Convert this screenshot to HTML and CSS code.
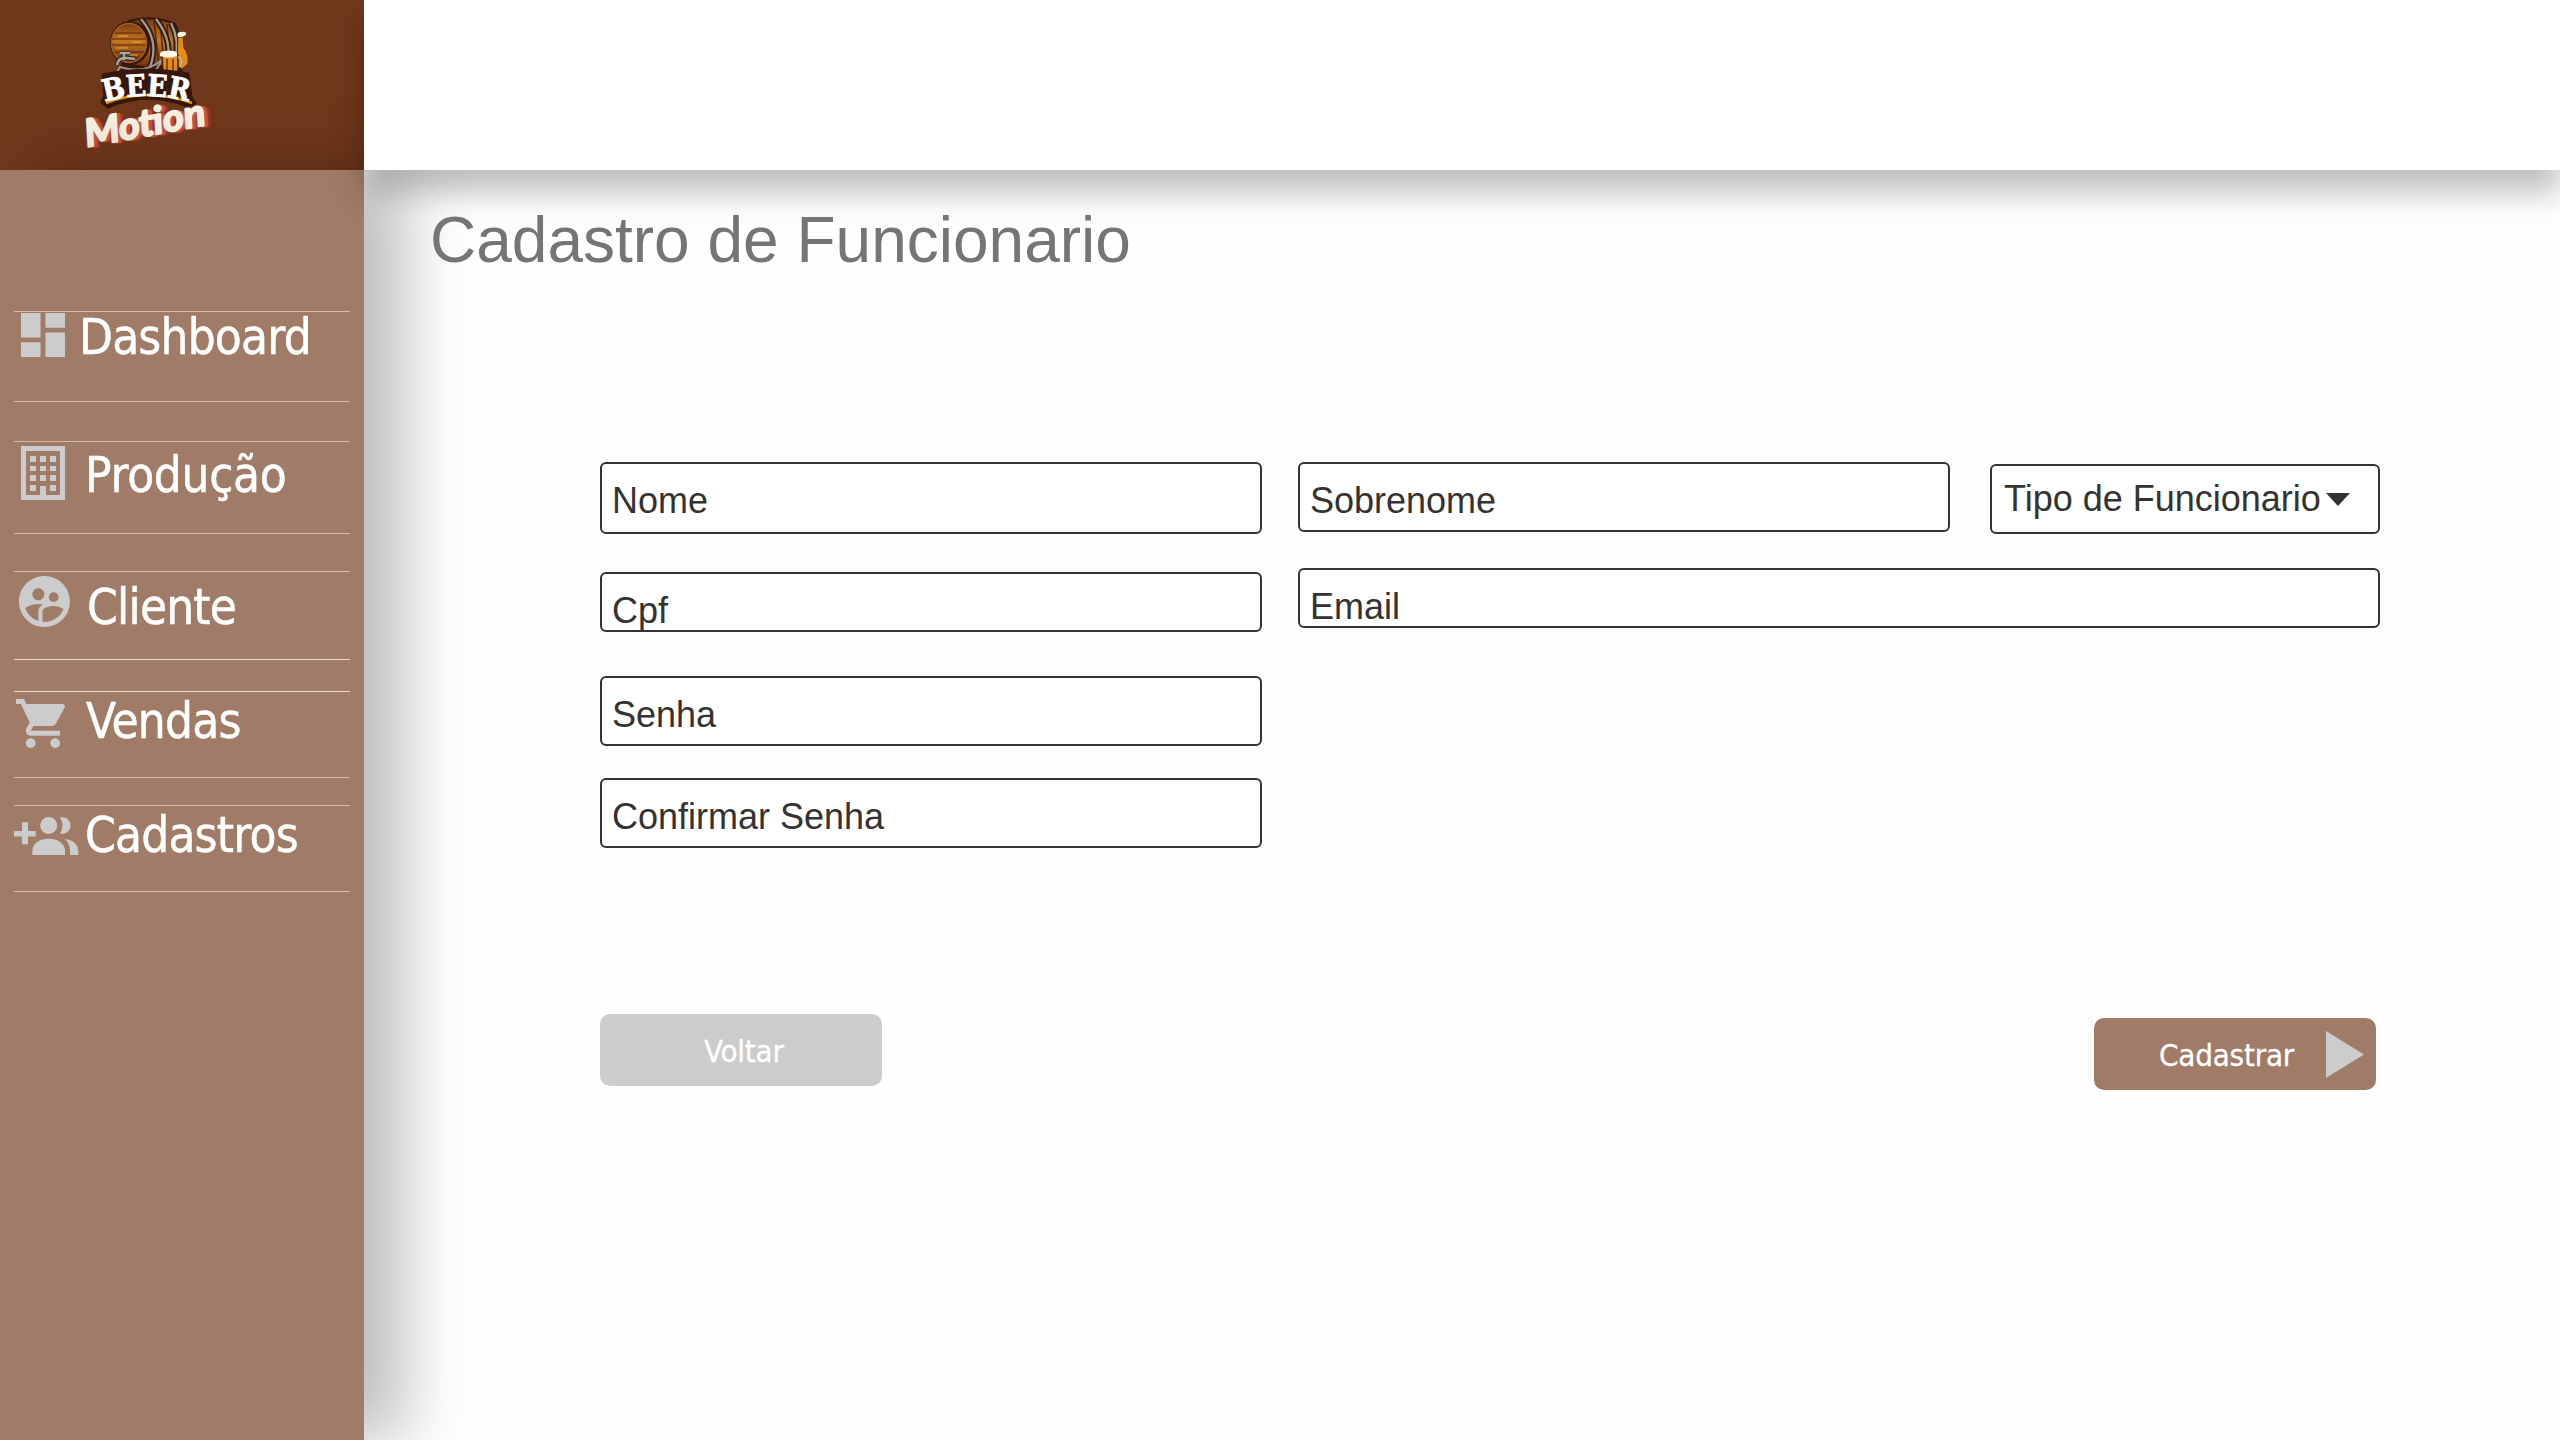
FILE: index.html
```html
<!DOCTYPE html>
<html lang="pt-BR">
<head>
<meta charset="utf-8">
<title>Cadastro de Funcionario</title>
<link rel="stylesheet" href="styles.css">
</head>
<body>
<div class="app">
  <div class="brand">
    <svg class="logo" width="136" height="136" viewBox="0 0 136 136" role="img" aria-label="Beer Motion">
      <defs>
        <linearGradient id="wood" x1="0" y1="0" x2="0" y2="1">
          <stop offset="0" stop-color="#7a3c10"/><stop offset=".45" stop-color="#c77620"/><stop offset="1" stop-color="#6b310c"/>
        </linearGradient>
        <path id="arc" d="M21.500 85Q63 73 107 85"/>
      </defs>
      <path d="M30 59L43 40H94L103 61Q66 55 30 59Z" fill="#3a1a0a"/>
      <path d="M46 4Q70-2 92 7Q101 24 94 44Q76 54 48 48Z" fill="url(#wood)" stroke="#32170a" stroke-width="2"/>
      <path d="M77 5l4 42M84 7l3 38M71 4l5 44M91 14l2 24" stroke="#54270c" stroke-width="1.5" fill="none"/>
      <path d="M58 2Q77 24 67 50M73 2Q91 25 83 48M88 6Q97 24 92 44" fill="none" stroke="#2e1c15" stroke-width="6"/>
      <path d="M58 2Q77 24 67 50M73 2Q91 25 83 48M88 6Q97 24 92 44" fill="none" stroke="#a99b8e" stroke-width="2.2"/>
      <ellipse cx="47" cy="26" rx="20" ry="22" fill="#32170a"/>
      <ellipse cx="46" cy="26" rx="17.5" ry="19.5" fill="url(#wood)" stroke="#a75f1d" stroke-width="1.5"/>
      <path d="M32 16H59M29 22H63M29 28H63M31 35H61M36 41H56" stroke="#562909" stroke-width="1.2"/>
      <path d="M35 19h10M49 25h9M33 31h12M46 38h9" stroke="#eda443" stroke-width="1"/>
      <path d="M33 57l4-7q25 8 43-8l-9 14" fill="none" stroke="#9c938a" stroke-width="2.2"/>
      <path d="M34 48q1-8 10-7l8 1M41 36v7M37 36h10" fill="none" stroke="#292321" stroke-width="4.500"/>
      <path d="M34 48q1-8 10-7l8 1M41 36v7M37 36h10" fill="none" stroke="#aaa59e" stroke-width="2.500"/>
      <path d="M95 20h5l1 11q5 5 4 16l-6 5-5-4Z" fill="#e78b13" stroke="#5a290c"/>
      <path d="M95 20q-2-5 3-5q6-1 5 3l-4 2Z" fill="#fff7e8"/>
      <path d="M79 38h16v16q-8 4-15 0Z" fill="#e58c14" stroke="#482008" stroke-width="1.500"/>
      <path d="M84 42v12M90 42v12" stroke="#8d440d" stroke-width="2"/>
      <path d="M95 40q6 2 2 10" fill="none" stroke="#c2afa0" stroke-width="2"/>
      <path d="M77 39q-1-5 5-5q5-1 8 0q5 0 4 5q-8 3-17 0Z" fill="#fff8ed"/>
      <path d="M20 58Q62 49 105 57L108 80L112 86L105 89Q64 73 25 90L19 85L22 78Z" fill="#35180b" stroke="#35180b" stroke-width="3" stroke-linejoin="round"/>
      <path d="M23 86Q64 70 109 86" fill="none" stroke="#dc9510" stroke-width="2.500"/>
      <text class="logo-beer"><textPath href="#arc" textLength="85" lengthAdjust="spacingAndGlyphs">BEER</textPath></text>
      <g transform="translate(4 130) rotate(-10.500)">
        <text class="logo-motion logo-motion-deep" x="6" y="2" textLength="122" lengthAdjust="spacingAndGlyphs">Motion</text>
        <text class="logo-motion logo-motion-red" x="3.500" y="1" textLength="122" lengthAdjust="spacingAndGlyphs">Motion</text>
        <text class="logo-motion" x="0" y="0" textLength="122" lengthAdjust="spacingAndGlyphs">Motion</text>
      </g>
    </svg>
  </div>
  <header class="topbar"></header>
  <nav class="sidebar">
    <a class="item item-dashboard">
      <svg class="icon" width="44" height="44" viewBox="3 3 18 18"><path d="M3 13h8V3H3v10zm0 8h8v-6H3v6zm10 0h8V11h-8v10zm0-18v6h8V3h-8z"/></svg>
      <span class="label">Dashboard</span>
    </a>
    <a class="item item-producao">
      <svg class="icon" width="44" height="54" viewBox="0 0 44 54"><path fill-rule="evenodd" d="M0 0H44V54H0ZM5 5V49H19V40H25V49H39V5Z"/><path d="M9 10h6v6H9zM19 10h6v6h-6zM29 10h6v6h-6zM9 20h6v5H9zM19 20h6v5h-6zM29 20h6v5h-6zM9 29h6v6H9zM19 29h6v6h-6zM29 29h6v6h-6zM9 39h6v6H9zM29 39h6v6h-6z"/></svg>
      <span class="label">Produção</span>
    </a>
    <a class="item item-cliente item-bright-bottom">
      <svg class="icon" width="51" height="51" viewBox="2 2 20 20"><path d="M11.99 2c-5.52 0-10 4.48-10 10s4.48 10 10 10 10-4.48 10-10-4.48-10-10-10zm3.61 6.34c1.07 0 1.93.86 1.93 1.93 0 1.07-.86 1.93-1.93 1.93-1.07 0-1.93-.86-1.93-1.93-.01-1.07.86-1.93 1.93-1.93zm-6-1.58c1.3 0 2.36 1.06 2.36 2.36 0 1.3-1.06 2.36-2.36 2.36s-2.36-1.06-2.36-2.36c0-1.31 1.05-2.36 2.36-2.36zm0 9.13v3.75c-2.4-.75-4.3-2.6-5.14-4.96 1.05-1.12 3.67-1.69 5.14-1.69.53 0 1.2.08 1.9.22-1.64.87-1.9 2.02-1.9 2.68zM11.99 20c-.27 0-.53-.01-.79-.04v-4.07c0-1.42 2.94-2.13 4.4-2.13 1.07 0 2.92.39 3.84 1.15-1.17 2.97-4.06 5.09-7.45 5.09z"/></svg>
      <span class="label">Cliente</span>
    </a>
    <a class="item item-vendas item-bright-top">
      <svg class="icon" width="49" height="49" viewBox="1 2 20 20"><path d="M7 18c-1.1 0-1.99.9-1.99 2S5.900 22 7 22s2-.9 2-2-.9-2-2-2zM1 2v2h2l3.600 7.590-1.350 2.450c-.16.28-.25.61-.25.96 0 1.100.9 2 2 2h12v-2H7.420c-.14 0-.25-.11-.25-.25l.03-.12.9-1.630h7.450c.75 0 1.410-.41 1.750-1.030l3.580-6.490c.08-.14.12-.31.12-.48 0-.55-.45-1-1-1H5.210l-.94-2H1zm16 16c-1.100 0-1.990.9-1.990 2s.89 2 1.990 2 2-.9 2-2-.9-2-2-2z"/></svg>
      <span class="label">Vendas</span>
    </a>
    <a class="item item-cadastros">
      <svg class="icon" width="65" height="38" viewBox="0 0 65 38"><path d="M8 5.300h6V14h7.700v5.500H14V27.300H8V19.500H0V14H8Z"/><circle cx="34.700" cy="8.500" r="8.500"/><path d="M46 .5C53-1 56.500 4 56.500 8.500S53 18 46 16.500Q51 8.500 46 .5Z"/><path d="M18.300 38V34C18.300 26 26 21.700 34.700 21.700S51 26 51 34V38Z"/><path d="M51 22C59 22.500 64.300 28 64.300 34V38H56V34Q56 27 51 22Z"/></svg>
      <span class="label">Cadastros</span>
    </a>
  </nav>
  <main class="content">
    <h1 class="title">Cadastro de Funcionario</h1>
    <form class="form">
      <div class="fields">
        <div class="column column-left">
          <label class="field field-nome">Nome</label>
          <label class="field field-cpf">Cpf</label>
          <label class="field field-senha">Senha</label>
          <label class="field field-confirmar">Confirmar Senha</label>
        </div>
        <div class="column column-right">
          <div class="row">
            <label class="field field-sobrenome">Sobrenome</label>
            <div class="field field-tipo"><span>Tipo de Funcionario</span><svg width="24" height="13" viewBox="0 0 24 13"><path d="M0 0H24L12 13Z" fill="#333"/></svg></div>
          </div>
          <label class="field field-email">Email</label>
        </div>
      </div>
      <div class="actions">
        <button type="button" class="button button-back">Voltar</button>
        <button type="button" class="button button-submit">Cadastrar<svg class="play" width="38" height="47" viewBox="0 0 38 47"><path d="M0 0L38 23.500L0 47Z" fill="#ccc"/></svg></button>
      </div>
    </form>
  </main>
</div>
</body>
</html>
```
FILE: styles.css
```css
* { box-sizing: border-box; }

body {
  margin: 0;
  background: #fefefe;
  font-family: "Liberation Sans", Arial, sans-serif;
}

.app {
  display: grid;
  grid-template: 170px 1270px / 364px 1fr;
  height: 1440px;
  overflow: hidden;
}

/* Header */
.brand {
  background: #70371b;
  padding: 17px 0 0 83px;
}

.logo {
  display: block;
  overflow: visible;
}

.logo-beer {
  font: bold 30px "DejaVu Serif", serif;
  fill: #fff;
  stroke: #fff;
  stroke-width: .8px;
}

.logo-motion {
  font: italic bold 38px Lato, sans-serif;
  fill: #f7f1e1;
  stroke: #f7f1e1;
  stroke-width: 2px;
  stroke-linejoin: round;
}

.logo-motion-red { fill: #c9503f; stroke: #c9503f; }
.logo-motion-deep { fill: #8f3a29; stroke: #8f3a29; }

.topbar {
  z-index: 2;
  background: #fff;
  box-shadow: 0 22px 30px rgba(0, 0, 0, .26);
}

/* Sidebar */
.sidebar {
  z-index: 1;
  background: #a07b67;
  box-shadow: 40px 0 60px rgba(0, 0, 0, .25);
  padding: 141px 14px 0;
}

.item {
  display: flex;
  align-items: flex-start;
  border: solid #d3bbae;
  border-width: 1px 0;
  color: #fff;
}

.icon {
  flex: none;
  fill: #ccc;
}

.label {
  font: 49px/40px "DejaVu Sans Condensed", "DejaVu Sans", sans-serif;
  font-stretch: condensed;
  letter-spacing: -.8px;
  -webkit-text-stroke: .5px #fff;
  white-space: nowrap;
}

.item-dashboard { height: 91px; }
.item-dashboard .icon { margin: 1px 14px 0 7px; }
.item-dashboard .label { margin-top: 6px; }

.item-producao { height: 93px; margin-top: 39px; }
.item-producao .icon { margin: 4px 20px 0 7px; }
.item-producao .label { margin-top: 14px; letter-spacing: -.3px; }

.item-cliente { height: 89px; margin-top: 37px; }
.item-cliente .icon { margin: 4px 17px 0 5px; }
.item-cliente .label { margin-top: 16px; }

.item-vendas { height: 87px; margin-top: 31px; }
.item-vendas .icon { margin: 7px 21px 0 2px; }
.item-vendas .label { margin-top: 10px; }

.item-cadastros { height: 87px; margin-top: 27px; }
.item-cadastros .icon { margin: 11px 6px 0 0; }
.item-cadastros .label { margin-top: 10px; }

.item-bright-bottom { border-bottom-color: #ecdcd4; }
.item-bright-top { border-top-color: #ecdcd4; }

/* Content */
.content {
  z-index: 3;
  padding: 30px 180px 0 66px;
}

.title {
  margin: 0;
  color: #757575;
  font-size: 64px;
  font-weight: 400;
  line-height: 80px;
}

.form {
  padding: 182px 0 0 170px;
}

.fields {
  display: flex;
  gap: 36px;
  height: 386px;
}

.column {
  display: flex;
  flex-direction: column;
}

.column-left { width: 662px; }
.column-right { width: 1082px; }

.row {
  display: flex;
  justify-content: space-between;
  align-items: flex-start;
}

.field {
  padding: 13px 10px 0;
  border: 2px solid #333;
  border-radius: 6px;
  background: #fff;
  color: #333;
  font-size: 36px;
  line-height: 48px;
  white-space: nowrap;
  overflow: hidden;
}

.field-nome { height: 72px; }
.field-cpf { height: 60px; margin-top: 38px; }
.field-senha { height: 70px; margin-top: 44px; }
.field-confirmar { height: 70px; margin-top: 32px; }
.field-sobrenome { width: 652px; height: 70px; }
.field-email { height: 60px; margin-top: 34px; }

.field-tipo {
  display: flex;
  align-items: flex-start;
  width: 390px;
  height: 70px;
  margin-top: 2px;
  padding: 9px 0 0 12px;
}

.field-tipo svg { margin: 18px 0 0 5px; }

.actions {
  display: flex;
  justify-content: space-between;
  align-items: flex-start;
  width: 1776px;
  padding-top: 166px;
}

.button {
  display: flex;
  align-items: flex-start;
  width: 282px;
  height: 72px;
  padding: 0;
  border: 0;
  border-radius: 10px;
  color: #fff;
  font: 31px/40px "DejaVu Sans Condensed", "DejaVu Sans", sans-serif;
  font-stretch: condensed;
  letter-spacing: -.2px;
  -webkit-text-stroke: .3px #fff;
}

.button-back {
  padding: 17px 0 0 104px;
  background: #ccc;
}

.button-submit {
  justify-content: space-between;
  margin-top: 4px;
  padding: 17px 12px 0 65px;
  background: #a07b67;
}

.play { margin-top: -4px; }
```
